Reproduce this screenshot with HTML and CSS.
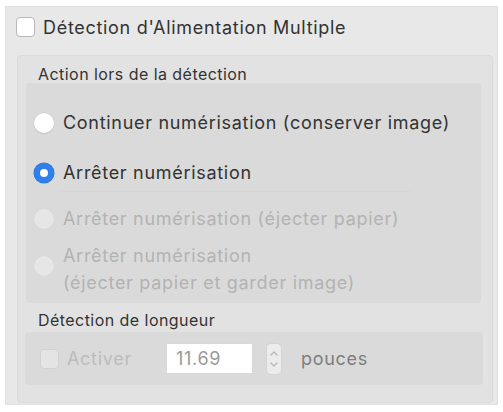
FILE: index.html
```html
<!DOCTYPE html>
<html lang="fr">
<head>
<meta charset="utf-8">
<link rel="stylesheet" href="styles.css">
</head>
<body>
<div class="panel">
  <div class="header">
    <span class="check"></span>
    <span class="title">Détection d'Alimentation Multiple</span>
  </div>
  <div class="group">
    <div class="label label-action">Action lors de la détection</div>
    <div class="radiobox">
      <div class="row row1">
        <span class="radio"></span>
        <span class="rtext">Continuer numérisation (conserver image)</span>
      </div>
      <div class="row row2">
        <span class="radio on"></span>
        <span class="rtext">Arrêter numérisation</span>
      </div>
      <div class="sep"></div>
      <div class="row row3 disabled">
        <span class="radio off"></span>
        <span class="rtext">Arrêter numérisation (éjecter papier)</span>
      </div>
      <div class="row row4 disabled">
        <span class="radio off"></span>
        <span class="rtext two">Arrêter numérisation<br>(éjecter papier et garder image)</span>
      </div>
    </div>
    <div class="label label-len">Détection de longueur</div>
    <div class="lenbox">
      <span class="check small off"></span>
      <span class="activer">Activer</span>
      <span class="field">11.69</span>
      <span class="stepper">
        <svg width="10" height="26" viewBox="0 0 10 26"><path d="M2 9 L5 6 L8 9" fill="none" stroke="#b9b9b9" stroke-width="1.4" stroke-linecap="round" stroke-linejoin="round"/><path d="M2 17 L5 20 L8 17" fill="none" stroke="#b9b9b9" stroke-width="1.4" stroke-linecap="round" stroke-linejoin="round"/></svg>
      </span>
      <span class="unit">pouces</span>
    </div>
  </div>
</div>
</body>
</html>
```
FILE: styles.css
```css
* { box-sizing: border-box; }
html, body { margin: 0; padding: 0; background: #ffffff; }
body {
  font-family: Inter, "Liberation Sans", sans-serif;
  color: #2b2b2b;
  width: 503px;
  height: 412px;
  overflow: hidden;
}
.panel {
  margin: 6px 5px 0 5px;
  height: 399px;
  background: #e8e8e8;
  border: 1px solid #e0e0e0;
  padding: 10px 4px 0 10px;
  display: flex;
  flex-direction: column;
}
.header {
  display: flex;
  align-items: center;
  height: 20px;
}
.check {
  width: 19px;
  height: 20px;
  background: #ffffff;
  border: 1px solid #b8b8b8;
  border-radius: 4px;
  flex: none;
}
.title {
  margin-left: 8px;
  font-size: 18px;
  letter-spacing: 0.7px;
  color: #333333;
}
.group {
  margin: 18px 0 0 1px;
  height: 348px;
  background: #e2e2e2;
  border: 1px solid #dadada;
  border-radius: 4px;
  display: flex;
  flex-direction: column;
}
.label {
  font-size: 16px;
  letter-spacing: 0.45px;
  color: #333;
  padding-left: 20px;
  line-height: 18px;
}
.label-action { margin-top: 9px; }
.radiobox {
  margin: 0 11px 0 8px;
  height: 220px;
  flex: none;
  background: #dadada;
  border-radius: 4px;
  padding: 26px 0 0 8px;
  overflow: hidden;
}
.row {
  display: flex;
  align-items: center;
  height: 28px;
}
.row2 { margin-top: 22px; }
.sep {
  height: 1px;
  margin: 4px 70px 0 26px;
  background: #d6d6d6;
}
.row3 { margin-top: 13px; }
.row4 { margin-top: 6px; height: 54px; }
.radio {
  width: 20px;
  height: 20px;
  border-radius: 50%;
  background: #ffffff;
  box-shadow: 0 0 0 0.5px #c8c8c8, 0 1px 1px rgba(0,0,0,0.12);
  flex: none;
  position: relative;
}
.radio.on {
  background: #2f80ea;
  box-shadow: 0 0 0 0.5px #2a74d6;
}
.radio.on::after {
  content: "";
  position: absolute;
  left: 6px;
  top: 6px;
  width: 8px;
  height: 8px;
  border-radius: 50%;
  background: #ffffff;
}
.radio.off {
  background: #e6e6e6;
  box-shadow: 0 0 0 0.5px #d6d6d6;
}
.rtext {
  margin-left: 9px;
  font-size: 18px;
  letter-spacing: 0.7px;
  color: #333333;
  line-height: 26px;
}
.disabled .rtext { color: #b3b3b3; }
.rtext.two { line-height: 27px; margin-top: 6px; }
.label-len { margin-top: 8px; }
.lenbox {
  margin: 3px 9px 0 7px;
  height: 53px;
  flex: none;
  background: #dadada;
  border-radius: 4px;
  display: flex;
  align-items: center;
  padding-left: 15px;
}
.check.small.off {
  background: #e4e4e4;
  border-color: #d2d2d2;
}
.activer {
  margin-left: 8px;
  font-size: 18px;
  color: #bcbcbc;
  letter-spacing: 0.7px;
  width: 99px;
}
.field {
  width: 87px;
  height: 31px;
  background: #ffffff;
  border: 1px solid #d8d8d8;
  font-size: 18px;
  color: #9a9a9a;
  letter-spacing: 0.7px;
  padding-left: 9px;
  line-height: 29px;
}
.stepper {
  margin-left: 13px;
  width: 16px;
  height: 32px;
  border-radius: 5px;
  background: #ececec;
  border: 1px solid #d4d4d4;
  display: flex;
  align-items: center;
  justify-content: center;
}
.unit {
  margin-left: 19px;
  font-size: 18px;
  color: #7e7e7e;
  letter-spacing: 0.7px;
}
```
